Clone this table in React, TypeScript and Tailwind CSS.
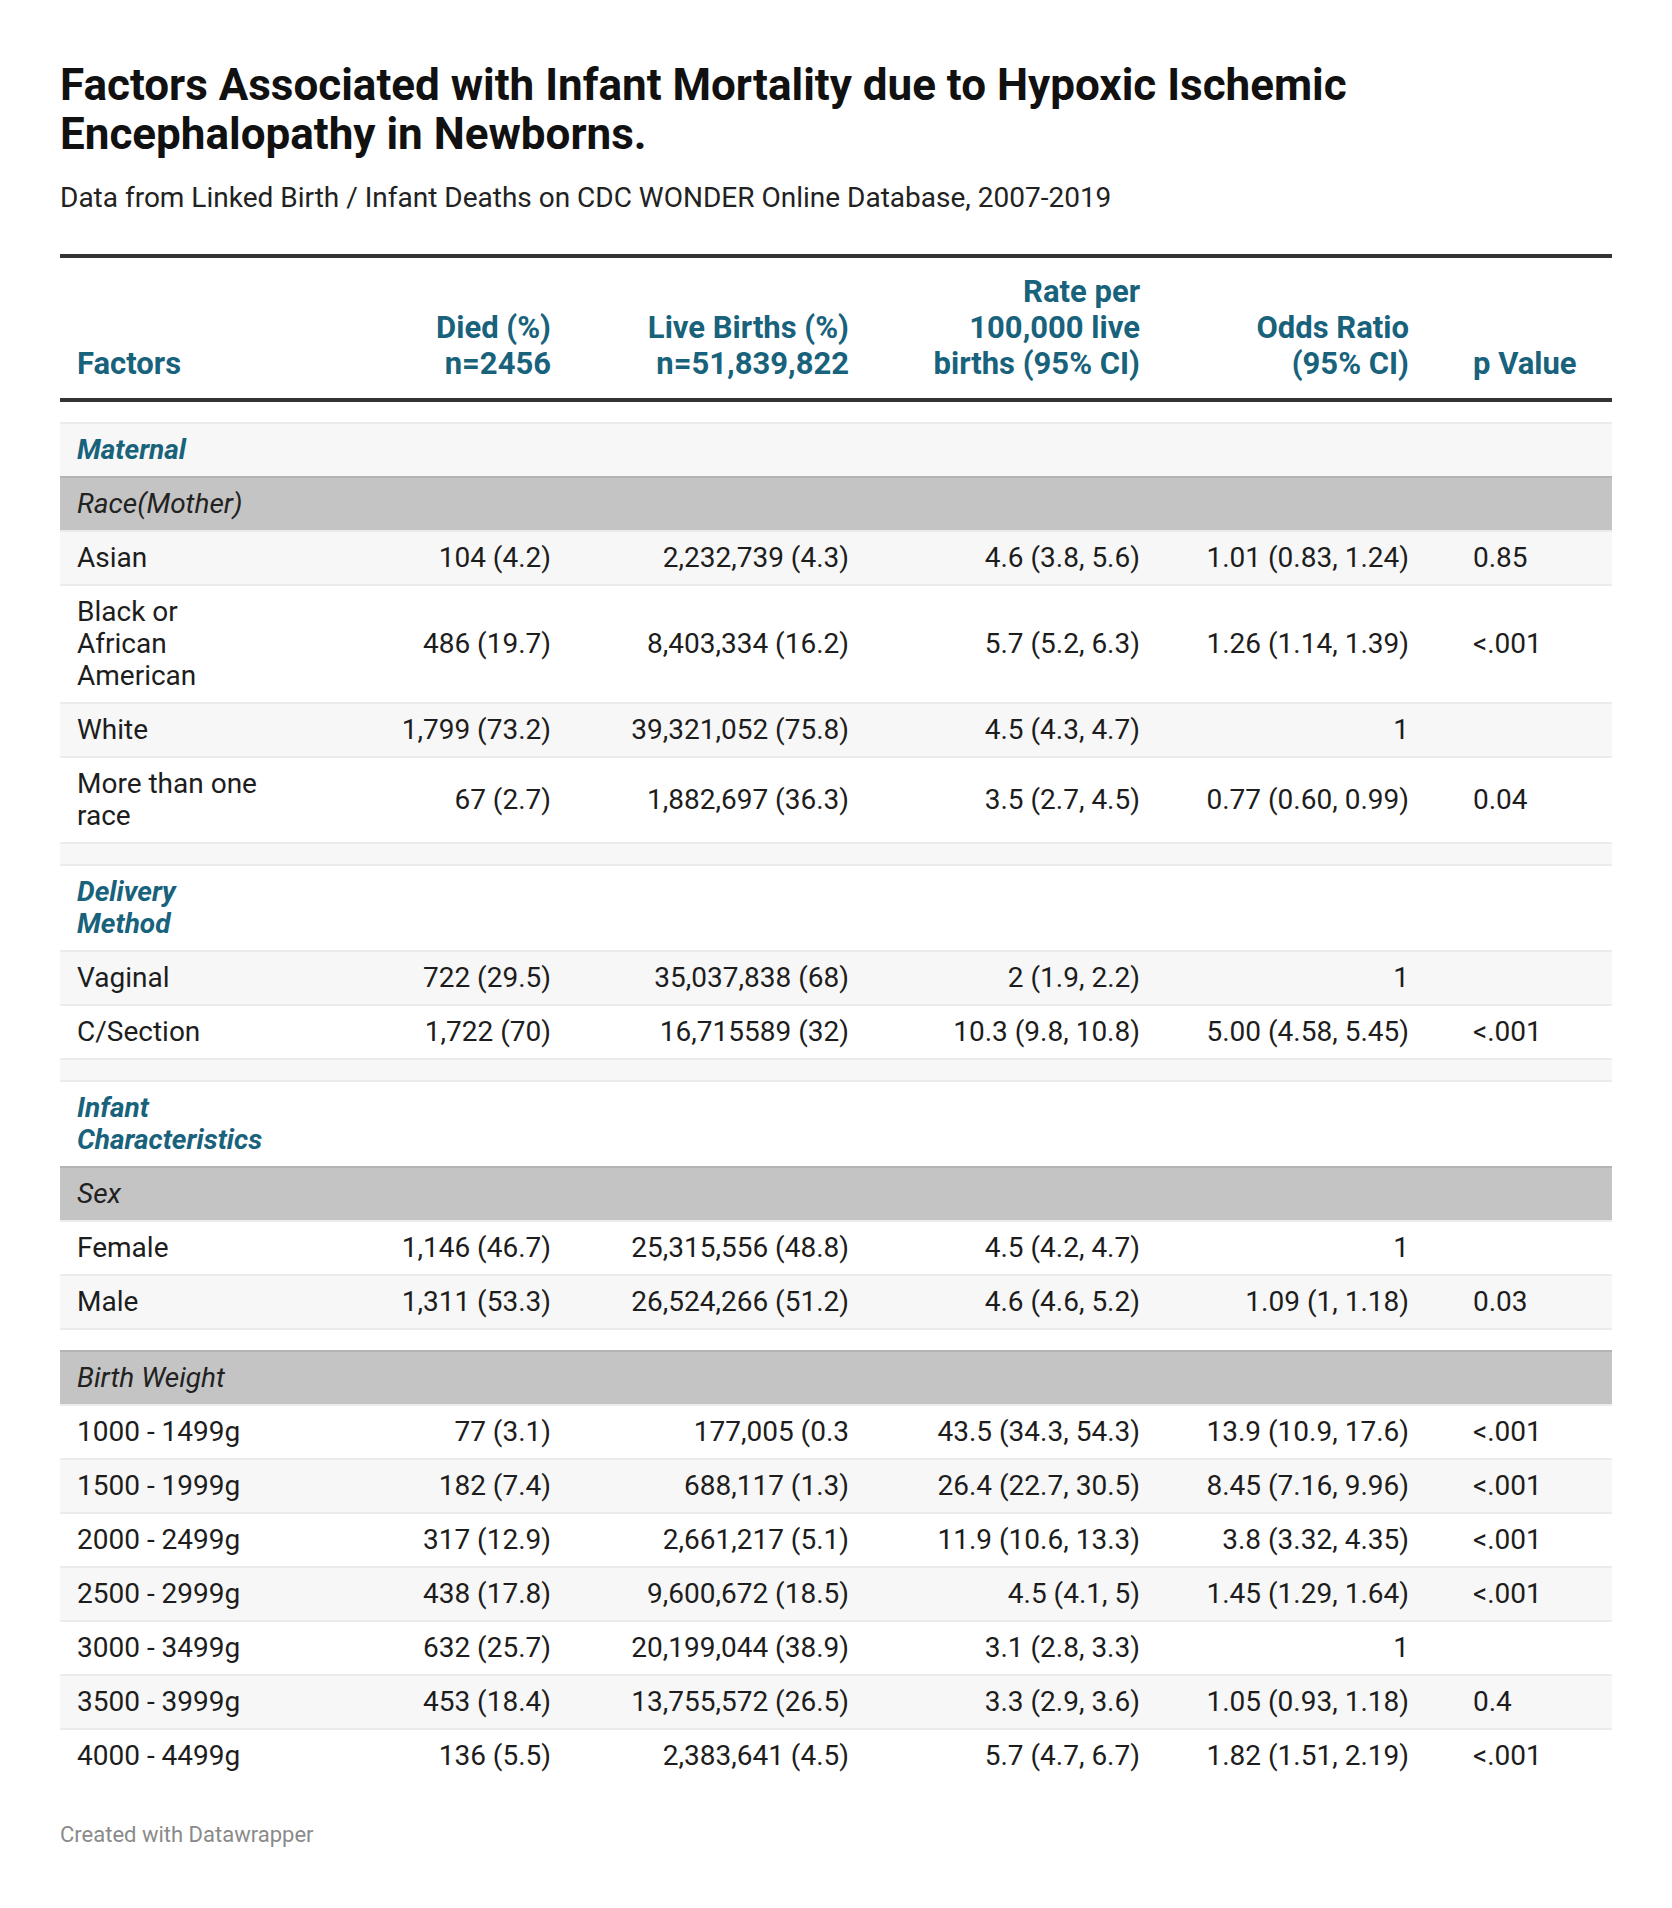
import React from 'react'

type Row =
  | { kind: 'section'; label: string[] }
  | { kind: 'group'; label: string }
  | { kind: 'spacer' }
  | { kind: 'data'; label: string[]; values: string[] }

const rows: Row[] = [
  { kind: 'section', label: ['Maternal'] },
  { kind: 'group', label: 'Race(Mother)' },
  { kind: 'data', label: ['Asian'], values: ['104 (4.2)', '2,232,739 (4.3)', '4.6 (3.8, 5.6)', '1.01 (0.83, 1.24)', '0.85'] },
  { kind: 'data', label: ['Black or', 'African', 'American'], values: ['486 (19.7)', '8,403,334 (16.2)', '5.7 (5.2, 6.3)', '1.26 (1.14, 1.39)', '<.001'] },
  { kind: 'data', label: ['White'], values: ['1,799 (73.2)', '39,321,052 (75.8)', '4.5 (4.3, 4.7)', '1', ''] },
  { kind: 'data', label: ['More than one', 'race'], values: ['67 (2.7)', '1,882,697 (36.3)', '3.5 (2.7, 4.5)', '0.77 (0.60, 0.99)', '0.04'] },
  { kind: 'spacer' },
  { kind: 'section', label: ['Delivery', 'Method'] },
  { kind: 'data', label: ['Vaginal'], values: ['722 (29.5)', '35,037,838 (68)', '2 (1.9, 2.2)', '1', ''] },
  { kind: 'data', label: ['C/Section'], values: ['1,722 (70)', '16,715589 (32)', '10.3 (9.8, 10.8)', '5.00 (4.58, 5.45)', '<.001'] },
  { kind: 'spacer' },
  { kind: 'section', label: ['Infant', 'Characteristics'] },
  { kind: 'group', label: 'Sex' },
  { kind: 'data', label: ['Female'], values: ['1,146 (46.7)', '25,315,556 (48.8)', '4.5 (4.2, 4.7)', '1', ''] },
  { kind: 'data', label: ['Male'], values: ['1,311 (53.3)', '26,524,266 (51.2)', '4.6 (4.6, 5.2)', '1.09 (1, 1.18)', '0.03'] },
  { kind: 'spacer' },
  { kind: 'group', label: 'Birth Weight' },
  { kind: 'data', label: ['1000 - 1499g'], values: ['77 (3.1)', '177,005 (0.3', '43.5 (34.3, 54.3)', '13.9 (10.9, 17.6)', '<.001'] },
  { kind: 'data', label: ['1500 - 1999g'], values: ['182 (7.4)', '688,117 (1.3)', '26.4 (22.7, 30.5)', '8.45 (7.16, 9.96)', '<.001'] },
  { kind: 'data', label: ['2000 - 2499g'], values: ['317 (12.9)', '2,661,217 (5.1)', '11.9 (10.6, 13.3)', '3.8 (3.32, 4.35)', '<.001'] },
  { kind: 'data', label: ['2500 - 2999g'], values: ['438 (17.8)', '9,600,672 (18.5)', '4.5 (4.1, 5)', '1.45 (1.29, 1.64)', '<.001'] },
  { kind: 'data', label: ['3000 - 3499g'], values: ['632 (25.7)', '20,199,044 (38.9)', '3.1 (2.8, 3.3)', '1', ''] },
  { kind: 'data', label: ['3500 - 3999g'], values: ['453 (18.4)', '13,755,572 (26.5)', '3.3 (2.9, 3.6)', '1.05 (0.93, 1.18)', '0.4'] },
  { kind: 'data', label: ['4000 - 4499g'], values: ['136 (5.5)', '2,383,641 (4.5)', '5.7 (4.7, 6.7)', '1.82 (1.51, 2.19)', '<.001'] },
]

const cols = 'grid grid-cols-[230px_278px_298px_291px_269px_186px]'

const Lines = ({ lines }: { lines: string[] }) => (
  <>
    {lines.map((l, i) => (
      <React.Fragment key={i}>
        {i > 0 && <br />}
        {l}
      </React.Fragment>
    ))}
  </>
)

const TableRow = ({ row, index }: { row: Row; index: number }) => {
  const stripe = index % 2 === 0 ? 'bg-[#f7f7f7]' : 'bg-white'

  if (row.kind === 'group') {
    return (
      <div className="border-t-2 border-[#b3b3b3] bg-[#c4c4c4] px-[17px] py-[10px] italic text-[#222]">
        {row.label}
      </div>
    )
  }

  if (row.kind === 'spacer') {
    return <div className={`h-[22px] border-t-2 border-[#ebebeb] ${stripe}`} />
  }

  if (row.kind === 'section') {
    return (
      <div className={`border-t-2 border-[#ebebeb] ${stripe} px-[17px] py-[10px] font-bold italic text-[#18627c]`}>
        <Lines lines={row.label} />
      </div>
    )
  }

  return (
    <div className={`${cols} items-center border-t-2 border-[#ebebeb] ${stripe} text-[#1d1d1d]`}>
      <div className="px-[17px] py-[10px]">
        <Lines lines={row.label} />
      </div>
      {row.values.slice(0, 4).map((v, i) => (
        <div key={i} className="px-[17px] py-[10px] text-right whitespace-nowrap">
          {v}
        </div>
      ))}
      <div className="pl-[47px] pr-[17px] py-[10px] whitespace-nowrap">{row.values[4]}</div>
    </div>
  )
}

export default function App() {
  return (
    <div className="min-h-[1908px] w-[1672px] bg-white px-[60px] pt-[61px] font-['Roboto',sans-serif] text-[#1d1d1d]">
      <h1 className="text-[44px] font-bold leading-[49px] text-[#111]">
        Factors Associated with Infant Mortality due to Hypoxic Ischemic
        <br />
        Encephalopathy in Newborns.
      </h1>
      <p className="mt-[22px] text-[28px] leading-[33px] text-[#222]">
        Data from Linked Birth / Infant Deaths on CDC WONDER Online Database, 2007-2019
      </p>

      <div className="mt-[40px] w-[1552px] text-[28px] leading-[32px]">
        <div className={`${cols} items-end border-y-4 border-[#333] text-[31px] font-bold leading-[36px] text-[#18627c]`}>
          <div className="px-[17px] py-4">Factors</div>
          <div className="px-[17px] py-4 text-right">
            Died (%)
            <br />
            n=2456
          </div>
          <div className="px-[17px] py-4 text-right">
            Live Births (%)
            <br />
            n=51,839,822
          </div>
          <div className="px-[17px] py-4 text-right">
            Rate per
            <br />
            100,000 live
            <br />
            births (95% CI)
          </div>
          <div className="px-[17px] py-4 text-right">
            Odds Ratio
            <br />
            (95% CI)
          </div>
          <div className="pl-[47px] pr-[17px] py-4 whitespace-nowrap">p Value</div>
        </div>

        <div className="mt-5">
          {rows.map((row, i) => (
            <TableRow key={i} row={row} index={i} />
          ))}
        </div>
      </div>

      <p className="mt-[40px] text-[22px] leading-[26px] text-[#8a8a8a]">Created with Datawrapper</p>
    </div>
  )
}
